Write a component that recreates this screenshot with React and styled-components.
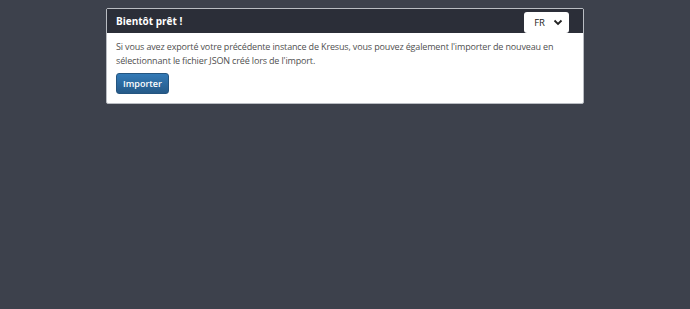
import React from "react";
import styled, { createGlobalStyle } from "styled-components";

const Global = createGlobalStyle`
  html, body {
    margin: 0;
    padding: 0;
    background: #3d414c;
    font-family: "Open Sans", "Liberation Sans", sans-serif;
  }
  body {
    height: 309px;
    overflow: hidden;
  }
`;

const Page = styled.div`
  padding-top: 8px;
`;

const Panel = styled.div`
  width: 478px;
  margin: 0 auto;
  background: #fff;
  border: 1px solid #b9bcc2;
  border-radius: 2px;
  box-sizing: border-box;
`;

const Header = styled.div`
  display: flex;
  align-items: center;
  justify-content: space-between;
  height: 24px;
  padding: 0 14px 0 9px;
  background: #2b2e38;
  color: #fff;
`;

const Title = styled.h3`
  margin: 0;
  font-size: 10px;
  font-weight: 700;
`;

const Select = styled.div`
  display: flex;
  align-items: center;
  gap: 8px;
  height: 21px;
  margin-top: 2px;
  padding: 0 6px 0 10px;
  background: #fff;
  color: #222;
  border-radius: 3px;
  font-size: 9.5px;
  box-sizing: border-box;
`;

const Body = styled.div`
  padding: 7px 9px 9px;
  color: #4f4f4f;
`;

const Text = styled.p`
  margin: 0 0 5px;
  font-size: 9px;
  line-height: 14px;
  letter-spacing: -0.15px;
`;

const Button = styled.button`
  display: block;
  height: 21px;
  padding: 0 6px;
  border: 1px solid #245580;
  border-radius: 3px;
  background: linear-gradient(#337ab7, #265a88);
  color: #fff;
  font-family: inherit;
  font-size: 9px;
  font-weight: 600;
`;

export default function App() {
  return (
    <Page>
      <Global />
      <Panel>
        <Header>
          <Title>Bientôt prêt !</Title>
          <Select>
            FR
            <svg width="10" height="7" viewBox="0 0 10 7">
              <path d="M1.5 1.5 L5 5 L8.5 1.5" fill="none" stroke="#222" strokeWidth="1.8" />
            </svg>
          </Select>
        </Header>
        <Body>
          <Text>
            Si vous avez exporté votre précédente instance de Kresus, vous pouvez également l'importer de nouveau en
            sélectionnant le fichier JSON créé lors de l'import.
          </Text>
          <Button>Importer</Button>
        </Body>
      </Panel>
    </Page>
  );
}
